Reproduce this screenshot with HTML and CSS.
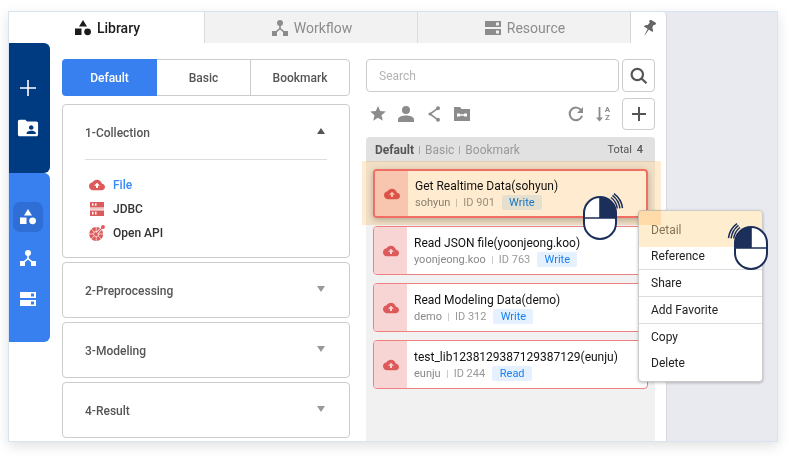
FILE: index.html
```html
<!DOCTYPE html>
<html lang="en">
<head>
<meta charset="utf-8">
<meta name="viewport" content="width=device-width, initial-scale=1">
<title>Library</title>
<link rel="stylesheet" href="styles.css">
</head>
<body>
<svg class="sprite" aria-hidden="true">
  <symbol id="i-shapes" viewBox="0 0 16 16"><path d="M8 0l4 6.400H4zM0 8.600h6.500V15H0z"/><circle cx="12.600" cy="11.800" r="3.400"/></symbol>
  <symbol id="i-flow" viewBox="0 0 16 16"><circle cx="8" cy="3" r="3"/><path d="M7.200 5h1.600v3.200l4.200 3.600-1 1.100-4-3.500-4 3.500-1-1.100 4.200-3.600z"/><path d="M0 11h5v5H0zM11 11h5v5h-5z"/></symbol>
  <symbol id="i-server" viewBox="0 0 16 16"><path fill-rule="evenodd" d="M0 1h16v6H0zM11 2.600v2.800h3V2.600zM0 9h16v6H0zM11 10.600v2.800h3v-2.800z"/></symbol>
  <symbol id="i-folder-user" viewBox="0 0 24 24"><path d="M20 5h-9L9 3H3C1.900 3 1 3.900 1 5v14c0 1.100.9 2 2 2h18c1.100 0 2-.9 2-2V7c0-1.100-.9-2-2-2zm-4.500 4c1.400 0 2.500 1.100 2.500 2.500S16.900 14 15.500 14 13 12.900 13 11.500 14.100 9 15.500 9zm5 9.500h-10v-1c0-1.700 3.300-2.500 5-2.500s5 .8 5 2.500z"/></symbol>
  <symbol id="i-cloud" viewBox="0 0 24 24"><path d="M19.350 10.040C18.670 6.590 15.640 4 12 4 9.110 4 6.600 5.640 5.350 8.040 2.340 8.360 0 10.910 0 14c0 3.310 2.690 6 6 6h13c2.760 0 5-2.240 5-5 0-2.640-2.050-4.780-4.650-4.960zM13.500 13v3.500h-3V13H7.500l4.500-4.500 4.500 4.500z"/></symbol>
  <symbol id="i-jdbc" viewBox="0 0 16 16"><path fill-rule="evenodd" d="M1 1h14v5.500H1zM3 2.200v2.600h1.500V2.200zM6 2.200v2.600h1.500V2.200zM1 9.500h14V15H1zM3 10.800v2.600h1.500v-2.600zM6 10.800v2.600h1.500v-2.600z"/><path d="M1 7.300h14v1.200H1z" opacity=".5"/></symbol>
  <symbol id="i-api" viewBox="0 0 16 16"><circle cx="7.200" cy="9" r="7"/><g stroke="#fff" stroke-width=".7" fill="none"><circle cx="7.200" cy="9" r="2.600"/><path d="M7.200 1.500v4.600M2 3.800l3.200 3.200M0 9h4.600M2 14.200L5.200 11M7.200 16.500v-4.600M12.400 14.200L9.200 11M15 9H9.800"/><path d="M7.200 9l6.600-6.800" stroke-width="2.600"/></g><path d="M7.200 9l6.600-6.800" stroke="currentColor" stroke-width="1.200"/><circle cx="7.200" cy="9" r="1.500"/><circle cx="14" cy="2" r="1.900"/></symbol>
  <symbol id="i-pin" viewBox="0 0 16 16"><g transform="rotate(32 8 8)"><path d="M4.500 0h7v2.200l-1.300.8.4 3.200c1.500.6 2.400 1.700 2.500 3.300H2.900C3 7.900 3.900 6.800 5.400 6.200L5.800 3l-1.300-.8zM7.300 9.500h1.400L8.200 16h-.4z"/></g></symbol>
  <symbol id="i-search" viewBox="0 0 18 18"><path fill="none" stroke="currentColor" stroke-width="2.200" d="M13 7.500a5.700 5.700 0 1 1-11.400 0 5.700 5.700 0 0 1 11.400 0zM11.500 11.500l5 4.800"/></symbol>
  <symbol id="i-star" viewBox="0 0 24 24"><path d="M12 17.700l7.200 4.300-1.900-8.200 6.400-5.500-8.400-.7L12 0 8.700 7.600l-8.400.7 6.400 5.500L4.800 22z"/></symbol>
  <symbol id="i-user" viewBox="0 0 16 16"><circle cx="8" cy="4" r="4"/><path d="M0 16v-2.500C0 10.600 5 9.600 8 9.600s8 1 8 3.900V16z"/></symbol>
  <symbol id="i-share" viewBox="0 0 16 16"><path fill="none" stroke="currentColor" stroke-width="1.600" d="M12 2.200L4 8l8 5.800"/><circle cx="12" cy="2.200" r="2"/><circle cx="4" cy="8" r="1.600"/><circle cx="12" cy="13.800" r="2"/></symbol>
  <symbol id="i-folder-link" viewBox="0 0 16 16"><path fill-rule="evenodd" d="M0 1h6l1.500 2H16v12H0zM3 7.500v3h3v-.8h4v.8h3v-3h-3v.8H6v-.8z"/></symbol>
  <symbol id="i-refresh" viewBox="0 0 16 16"><path fill="none" stroke="currentColor" stroke-width="2" d="M13.300 4.500A6.300 6.300 0 1 0 14 9.800"/><path d="M15 1v6H9z"/></symbol>
  <symbol id="i-plus" viewBox="0 0 16 16"><path d="M7 1h2v6h6v2H9v6H7V9H1V7h6z"/></symbol>
  <symbol id="i-plus-thin" viewBox="0 0 16 16"><path d="M7.200 0h1.600v7.200H16v1.600H8.800V16H7.200V8.800H0V7.200h7.200z"/></symbol>
  <symbol id="i-mouse-right" viewBox="0 0 42 48"><rect x="2" y="4" width="32" height="42" rx="16" fill="#fff" stroke="#1c2f5a" stroke-width="2"/><path d="M18 4a16 16 0 0 1 16 16v5H18z" fill="#1c2f5a"/><path d="M2 25h32M18 4v21" stroke="#1c2f5a" stroke-width="1.600"/><path fill="none" stroke="#1c2f5a" stroke-width="1.500" d="M29 4.500c3.500 2.500 5.600 6 6.300 11M30.500 2.400c4 3 6.700 7.200 7.400 13M32 .6c4.800 3.500 7.800 8 8.500 14.600"/></symbol>
</svg>

<div class="frame">
  <main class="panel">
    <nav class="tabs">
      <a class="tab tab-active" href="#library"><svg class="icon"><use href="#i-shapes"/></svg>Library</a>
      <a class="tab" href="#workflow"><svg class="icon"><use href="#i-flow"/></svg>Workflow</a>
      <a class="tab" href="#resource"><svg class="icon"><use href="#i-server"/></svg>Resource</a>
      <button class="pin" type="button" aria-label="Pin panel"><svg class="icon"><use href="#i-pin"/></svg></button>
    </nav>

    <div class="body">
      <aside class="rail">
        <div class="rail-group rail-dark">
          <button class="rail-btn" type="button" aria-label="New"><svg class="icon"><use href="#i-plus-thin"/></svg></button>
          <button class="rail-btn" type="button" aria-label="Shared folder"><svg class="icon icon-lg"><use href="#i-folder-user"/></svg></button>
        </div>
        <div class="rail-group rail-blue">
          <button class="rail-btn rail-current" type="button" aria-label="Library"><svg class="icon"><use href="#i-shapes"/></svg></button>
          <button class="rail-btn" type="button" aria-label="Workflow"><svg class="icon"><use href="#i-flow"/></svg></button>
          <button class="rail-btn" type="button" aria-label="Resource"><svg class="icon"><use href="#i-server"/></svg></button>
        </div>
      </aside>

      <section class="categories">
        <div class="segments">
          <button class="segment segment-active" type="button">Default</button>
          <button class="segment" type="button">Basic</button>
          <button class="segment" type="button">Bookmark</button>
        </div>
        <div class="group">
          <button class="group-head" type="button" aria-expanded="true">1-Collection<span class="caret caret-up"></span></button>
          <ul class="sources">
            <li><a class="source source-active" href="#file"><svg class="icon"><use href="#i-cloud"/></svg>File</a></li>
            <li><a class="source" href="#jdbc"><svg class="icon"><use href="#i-jdbc"/></svg>JDBC</a></li>
            <li><a class="source" href="#api"><svg class="icon"><use href="#i-api"/></svg>Open API</a></li>
          </ul>
        </div>
        <div class="group"><button class="group-head" type="button" aria-expanded="false">2-Preprocessing<span class="caret"></span></button></div>
        <div class="group"><button class="group-head" type="button" aria-expanded="false">3-Modeling<span class="caret"></span></button></div>
        <div class="group"><button class="group-head" type="button" aria-expanded="false">4-Result<span class="caret"></span></button></div>
      </section>

      <section class="results">
        <form class="search">
          <input class="search-input" type="search" placeholder="Search" aria-label="Search">
          <button class="square" type="button" aria-label="Search"><svg class="icon icon-md"><use href="#i-search"/></svg></button>
        </form>
        <div class="toolbar">
          <button class="tool" type="button" aria-label="Favorites"><svg class="icon"><use href="#i-star"/></svg></button>
          <button class="tool" type="button" aria-label="Mine"><svg class="icon"><use href="#i-user"/></svg></button>
          <button class="tool" type="button" aria-label="Shared"><svg class="icon"><use href="#i-share"/></svg></button>
          <button class="tool" type="button" aria-label="Linked folders"><svg class="icon"><use href="#i-folder-link"/></svg></button>
          <span class="spacer"></span>
          <button class="tool" type="button" aria-label="Refresh"><svg class="icon"><use href="#i-refresh"/></svg></button>
          <button class="tool sort" type="button" aria-label="Sort A to Z">
            <svg class="sort-arrow" viewBox="0 0 7 16"><path d="M2.600 1h1.800v10.500H7L3.500 15.500 0 11.500h2.600z"/></svg>
            <span class="sort-letters"><span>A</span><span>Z</span></span>
          </button>
          <button class="square" type="button" aria-label="Add"><svg class="icon"><use href="#i-plus"/></svg></button>
        </div>
        <div class="list">
          <header class="list-head">
            <strong>Default</strong><i class="bar"></i><span>Basic</span><i class="bar"></i><span>Bookmark</span>
            <span class="total">Total <b>4</b></span>
          </header>
          <ul class="cards">
            <li class="card card-selected">
              <span class="card-icon"><svg class="icon"><use href="#i-cloud"/></svg></span>
              <div class="card-text"><h3>Get Realtime Data(sohyun)</h3><p>sohyun<i class="line"></i><span class="id">ID 901</span><span class="badge">Write</span></p></div>
            </li>
            <li class="card">
              <span class="card-icon"><svg class="icon"><use href="#i-cloud"/></svg></span>
              <div class="card-text"><h3>Read JSON file(yoonjeong.koo)</h3><p>yoonjeong.koo<i class="line"></i><span class="id">ID 763</span><span class="badge">Write</span></p></div>
            </li>
            <li class="card">
              <span class="card-icon"><svg class="icon"><use href="#i-cloud"/></svg></span>
              <div class="card-text"><h3>Read Modeling Data(demo)</h3><p>demo<i class="line"></i><span class="id">ID 312</span><span class="badge">Write</span></p></div>
            </li>
            <li class="card">
              <span class="card-icon"><svg class="icon"><use href="#i-cloud"/></svg></span>
              <div class="card-text"><h3>test_lib1238129387129387129(eunju)</h3><p>eunju<i class="line"></i><span class="id">ID 244</span><span class="badge">Read</span></p></div>
            </li>
          </ul>
          <div class="menu" role="menu">
            <button class="menu-item" type="button" role="menuitem">Detail</button>
            <button class="menu-item menu-ruled" type="button" role="menuitem">Reference</button>
            <button class="menu-item menu-ruled" type="button" role="menuitem">Share</button>
            <button class="menu-item menu-ruled" type="button" role="menuitem">Add Favorite</button>
            <button class="menu-item" type="button" role="menuitem">Copy</button>
            <button class="menu-item" type="button" role="menuitem">Delete</button>
            <span class="glow glow-menu"></span>
          </div>
          <span class="glow glow-card"></span>
          <svg class="mouse mouse-card" aria-hidden="true"><use href="#i-mouse-right"/></svg>
          <svg class="mouse mouse-menu" aria-hidden="true"><use href="#i-mouse-right"/></svg>
        </div>
      </section>
    </div>
  </main>
</div>
</body>
</html>
```
FILE: styles.css
```css
* { box-sizing: border-box; }

body {
  margin: 0;
  padding: 11px 11px 17px 8px;
  background: #fff;
  font: 12px/16px Roboto, "Liberation Sans", sans-serif;
  color: #222;
}

button, input {
  margin: 0;
  padding: 0;
  border: 0;
  background: none;
  font: inherit;
  color: inherit;
}

a { color: inherit; text-decoration: none; }
ul { list-style: none; margin: 0; padding: 0; }
h3, p { margin: 0; }

.sprite { position: absolute; width: 0; height: 0; }
.icon { display: block; flex: none; width: 16px; height: 16px; fill: currentColor; }
.icon-md { width: 18px; height: 18px; }
.icon-lg { width: 22px; height: 22px; }

.frame {
  display: flex;
  min-height: calc(100vh - 28px);
  border: 1px solid #d8e5f0;
  background: #e8eaf0;
  box-shadow: 0 4px 12px rgba(0, 0, 0, 0.12);
}

.panel {
  flex: 0 1 658px;
  display: flex;
  flex-direction: column;
  border-right: 1px solid #d6d8dc;
  border-radius: 0 4px 0 0;
  background: #fff;
}

/* Tabs */
.tabs { display: grid; grid-template-columns: 195px 1fr 1fr 36px; height: 31px; }
.tab {
  display: flex;
  align-items: center;
  justify-content: center;
  gap: 6px;
  padding-left: 2px;
  background: #f2f2f2;
  border-left: 1px solid #dcdcdc;
  color: #8c8c8c;
  font-size: 14px;
}
.tab-active { background: #fff; border-left: 0; color: #1c1c1c; font-weight: 500; }
.pin { display: grid; place-items: center; border-left: 1px solid #d6d6d6; color: #666; }

.body { display: flex; flex: 1; }

/* Side rail */
.rail { flex: 0 0 41px; color: #fff; }
.rail-group { display: flex; flex-direction: column; align-items: center; border-radius: 0 6px 6px 0; }
.rail-dark { gap: 10px; padding: 30px 3px 30px 0; background: #003a80; }
.rail-blue { gap: 11px; padding: 29px 3px 28px 0; background: #3880ef; }
.rail-btn { display: grid; place-items: center; width: 30px; height: 30px; border-radius: 7px; }
.rail-current { background: #2f6ed4; }

/* Category column */
.categories { flex: 1 1 288px; display: flex; flex-direction: column; gap: 4px; margin: 16px 0 2px 12px; }
.segments { display: grid; grid-template-columns: 94px 93px 1fr; height: 37px; margin-bottom: 4px; border: 1px solid #ccc; border-radius: 4px; }
.segment { color: #555; font-weight: 500; }
.segment + .segment + .segment { border-left: 1px solid #ccc; }
.segment-active { margin: -1px 0 -1px -1px; border-radius: 4px 0 0 4px; background: #3880ef; color: #fff; }
.group { padding: 0 22px; border: 1px solid #ccc; border-radius: 4px; }
.group-head { display: flex; align-items: center; justify-content: space-between; width: 100%; height: 54px; padding: 2px 2px 0 0; color: #555; font-weight: 500; }
.caret { margin-bottom: 4px; border: 4px solid transparent; border-top: 6px solid #999; border-bottom: 0; }
.caret-up { border-top: 0; border-bottom: 6px solid #555; }
.sources { padding: 13px 4px 12px; border-top: 1px solid #ddd; }
.source { display: flex; align-items: center; gap: 8px; height: 24px; color: #333; font-weight: 500; }
.source .icon { color: #dc5a5a; }
.source-active { color: #3a8af5; }

/* Result column */
.results { flex: 1 1 289px; display: flex; flex-direction: column; margin: 16px 11px 0 16px; }
.search { display: flex; gap: 3px; }
.search-input { flex: 1; min-width: 0; height: 33px; padding: 0 12px; border: 1px solid #ccc; border-radius: 4px; appearance: none; }
.search-input::placeholder { color: #b4b4b4; opacity: 1; }
.square { display: grid; place-items: center; width: 33px; height: 33px; border: 1px solid #ccc; border-radius: 4px; color: #555; }
.toolbar { display: flex; align-items: center; gap: 12px; margin: 6px 0 7px; padding-left: 4px; color: #8c8c8c; }
.toolbar .square { height: 32px; }
.spacer { flex: 1; }
.sort { display: flex; align-items: center; gap: 2px; }
.sort-arrow { width: 7px; height: 16px; fill: currentColor; }
.sort-letters { display: grid; font-size: 8px; line-height: 8px; font-weight: 700; }
.list { position: relative; flex: 1; border-radius: 4px 4px 0 0; background: #f1f1f1; }
.list-head { display: flex; align-items: center; gap: 5px; height: 25px; padding: 1px 12px 0 9px; border-radius: 4px 4px 0 0; background: #e1e1e1; color: #999; }
.list-head strong { color: #555; font-weight: 700; }
.bar { width: 1px; height: 8px; background: #aaa; }
.total { margin-left: auto; color: #555; font-size: 11px; }
.total b { margin-left: 2px; font-weight: 500; }
.cards { display: flex; flex-direction: column; gap: 8px; padding: 7px; }
.card { display: flex; height: 49px; border: 1px solid #ee8080; border-radius: 4px; background: #fff; overflow: hidden; }
.card-selected { border: 2px solid #f07878; box-shadow: 0 2px 6px rgba(0, 0, 0, 0.25); }
.card-icon { display: grid; place-items: center; flex: 0 0 33px; background: #f8d5d5; color: #dc5a5a; }
.card-text { display: flex; flex-direction: column; justify-content: center; padding-left: 7px; white-space: nowrap; }
.card h3 { font-size: 12px; line-height: 18px; font-weight: 400; color: #111; }
.card p { display: flex; align-items: center; height: 16px; font-size: 11px; color: #888; }
.line { width: 1px; height: 8px; margin: 0 6px; background: #ccc; }
.id { color: #999; }
.badge { min-width: 40px; margin-left: 7px; padding: 0 4px; border-radius: 2px; background: #e5f1fe; color: #1a80f0; text-align: center; line-height: 15px; }

/* Context menu over the list */
.menu {
  position: absolute;
  top: 73px;
  left: 272px;
  width: 125px;
  padding: 6px 0 5px;
  border: 1px solid #ccc;
  border-radius: 4px;
  background: #fff;
  box-shadow: 0 1px 3px rgba(0, 0, 0, 0.25);
}
.menu-item { display: block; width: 100%; padding: 0 12px; line-height: 26px; text-align: left; color: #222; }
.menu-ruled { border-bottom: 1px solid #ddd; }

/* Highlights and pointer hints */
.glow { position: absolute; pointer-events: none; }
.glow-card { top: 24px; left: -4px; width: 299px; height: 64px; background: #ffecd0; mix-blend-mode: multiply; }
.glow-menu { top: 0; left: 0; width: 100%; height: 36px; background: rgba(255, 215, 150, 0.45); }
.mouse { position: absolute; width: 42px; height: 48px; pointer-events: none; }
.mouse-card { top: 56px; left: 216px; }
.mouse-menu { top: 86px; left: 361px; transform: scaleX(-1); }
```
